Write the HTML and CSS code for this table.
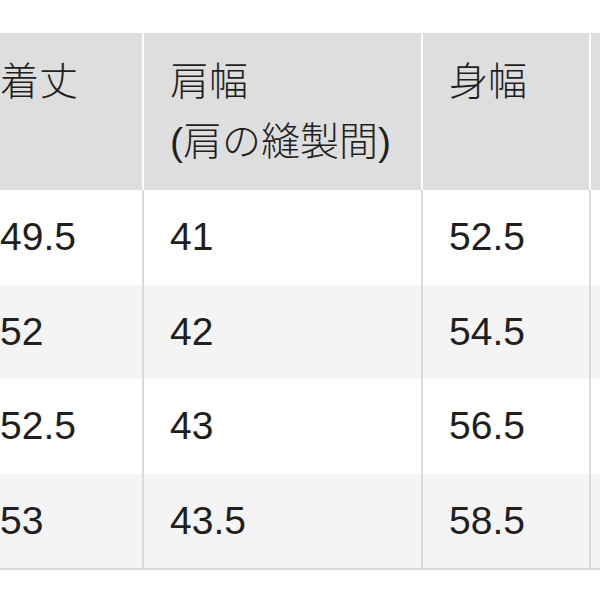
FILE: index.html
```html
<!DOCTYPE html>
<html lang="ja">
<head>
<meta charset="utf-8">
<title>サイズ表</title>
<link rel="stylesheet" href="styles.css">
</head>
<body>
<div class="frame">
  <div class="size-table">
    <div class="row head">
      <div class="cell">着丈</div>
      <div class="cell">肩幅<br>(肩の縫製間)</div>
      <div class="cell">身幅</div>
      <div class="cell"></div>
    </div>
    <div class="row">
      <div class="cell">49.5</div>
      <div class="cell">41</div>
      <div class="cell">52.5</div>
      <div class="cell"></div>
    </div>
    <div class="row alt">
      <div class="cell">52</div>
      <div class="cell">42</div>
      <div class="cell">54.5</div>
      <div class="cell"></div>
    </div>
    <div class="row">
      <div class="cell">52.5</div>
      <div class="cell">43</div>
      <div class="cell">56.5</div>
      <div class="cell"></div>
    </div>
    <div class="row alt">
      <div class="cell">53</div>
      <div class="cell">43.5</div>
      <div class="cell">58.5</div>
      <div class="cell"></div>
    </div>
  </div>
</div>
</body>
</html>
```

FILE: styles.css
```css
html, body {
  margin: 0;
  padding: 0;
  overflow: hidden;
  background: #ffffff;
}

body {
  font-family: "Liberation Sans", "Noto Sans CJK JP", sans-serif;
  font-size: 39px;
  font-weight: 300;
  color: #1f1f1f;
}

.frame {
  width: 600px;
  overflow: hidden;
  padding-top: 33px;
}

.size-table {
  width: max-content;
  margin-left: -26px;
  border-bottom: 2px solid #d8d8d8;
}

.row {
  display: grid;
  grid-template-columns: 168px 279px 168px 200px;
  background: #ffffff;
}

.row.alt {
  background: #f4f4f4;
}

.cell {
  padding: 17px 0 17.5px 26px;
  line-height: 60px;
  white-space: nowrap;
}

.cell + .cell {
  border-left: 2px solid #dadada;
}

.head .cell {
  background: #dedede;
  padding: 19px 0 18px 26px;
}

.head .cell + .cell {
  border-left-color: #ffffff;
}
```
